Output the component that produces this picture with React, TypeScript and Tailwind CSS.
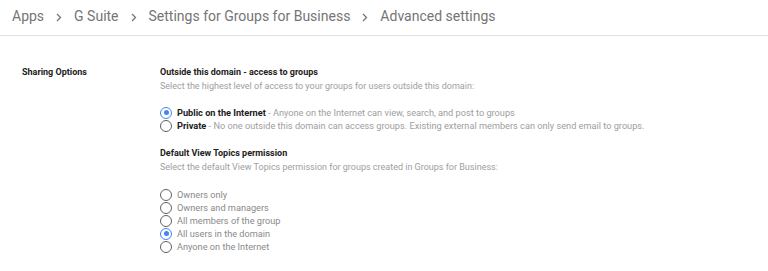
import React from "react";

function Radio({ checked }: { checked?: boolean }) {
  return checked ? (
    <span className="w-[12px] h-[12px] rounded-full border-[1.5px] border-[#4285f4] flex items-center justify-center shrink-0">
      <span className="w-[5px] h-[5px] rounded-full bg-[#4285f4]" />
    </span>
  ) : (
    <span className="w-[12px] h-[12px] rounded-full border-[1.5px] border-[#616161] shrink-0" />
  );
}

function Option({ checked, label, desc }: { checked?: boolean; label: string; desc?: string }) {
  return (
    <div className="flex items-center gap-[5px] h-[13px] text-[9.2px]">
      <Radio checked={checked} />
      {desc !== undefined ? (
        <span className="text-[#9e9e9e]">
          <span className="font-bold text-[#212121]">{label}</span> - {desc}
        </span>
      ) : (
        <span className="text-[#8a8a8a]">{label}</span>
      )}
    </div>
  );
}

function Chevron() {
  return (
    <svg width="6" height="9" viewBox="0 0 6 9" className="mt-[2px]">
      <path d="M1 1 L4.5 4.5 L1 8" stroke="#757575" strokeWidth="1.3" fill="none" />
    </svg>
  );
}

export default function App() {
  return (
    <div className="w-[768px] h-[271px] bg-white overflow-hidden" style={{ fontFamily: "Roboto, 'Liberation Sans', sans-serif" }}>
      <div className="h-[36px] border-b border-[#e0e0e0] flex items-center pl-[12px] text-[14px] text-[#757575] gap-[12px] pb-[3px]">
        <span>Apps</span>
        <Chevron />
        <span>G Suite</span>
        <Chevron />
        <span>Settings for Groups for Business</span>
        <Chevron />
        <span>Advanced settings</span>
      </div>
      <div className="flex pt-[30px] text-[9px] leading-[13px]">
        <div className="w-[160px] pl-[22px] font-bold text-[#212121]">Sharing Options</div>
        <div className="flex flex-col">
          <div className="font-bold text-[#212121] h-[14px]">Outside this domain - access to groups</div>
          <div className="text-[#9e9e9e] h-[14px]">Select the highest level of access to your groups for users outside this domain:</div>
          <div className="mt-[12px] flex flex-col">
            <Option checked label="Public on the Internet" desc="Anyone on the Internet can view, search, and post to groups" />
            <Option label="Private" desc="No one outside this domain can access groups. Existing external members can only send email to groups." />
          </div>
          <div className="font-bold text-[#212121] h-[14px] mt-[15px]">Default View Topics permission</div>
          <div className="text-[#9e9e9e] h-[14px]">Select the default View Topics permission for groups created in Groups for Business:</div>
          <div className="mt-[13px] flex flex-col">
            <Option label="Owners only" />
            <Option label="Owners and managers" />
            <Option label="All members of the group" />
            <Option checked label="All users in the domain" />
            <Option label="Anyone on the Internet" />
          </div>
        </div>
      </div>
    </div>
  );
}
